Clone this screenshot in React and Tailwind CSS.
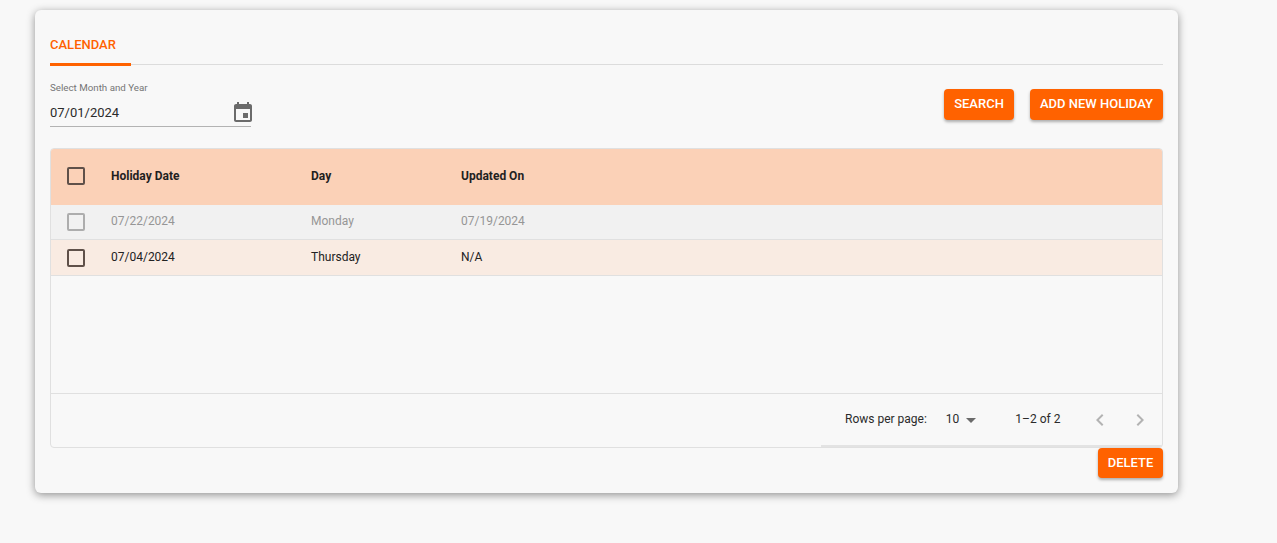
import React from 'react';

const ORANGE = 'bg-[#ff6200]';

const Check = ({ muted }) => (
  <div className="w-[60px] shrink-0 pl-[16px]">
    <div className={`w-[18px] h-[18px] rounded-[2px] border-2 ${muted ? 'border-[#adadad]' : 'border-[#5f5049]'}`}></div>
  </div>
);

const ActionButton = ({ children, className = '' }) => (
  <button className={`${ORANGE} text-white text-[13px] font-medium rounded-[4px] flex items-center justify-center shadow-[0_2px_3px_rgba(0,0,0,0.3)] ${className}`}>
    {children}
  </button>
);

const Row = ({ date, day, updated, className, muted }) => (
  <div className={`flex items-center border-b border-[#e0e0e0] text-[12px] shrink-0 ${className}`}>
    <Check muted={muted} />
    <div className="w-[200px] pb-[2px]">{date}</div>
    <div className="w-[150px] pb-[2px]">{day}</div>
    <div className="pb-[2px]">{updated}</div>
  </div>
);

export default function App() {
  return (
    <div className="min-h-[543px] bg-[#f8f8f8] pt-[10px] pl-[35px] font-['Roboto',sans-serif]">
      <div className="w-[1143px] h-[483px] bg-[#f8f8f8] rounded-[6px] px-[15px] pt-[15px] shadow-[0_2px_8px_rgba(0,0,0,0.42)]">
        {/* tabs */}
        <div className="h-[40px] border-b border-[#dcdcdc]">
          <div className="w-[81px] h-[41px] pt-[2px] text-[#ff6200] text-[13px] font-medium flex items-center border-b-[3px] border-[#ff6200]">
            CALENDAR
          </div>
        </div>

        {/* filters */}
        <div className="flex justify-between h-[83px]">
          <div className="w-[201px] pt-[17px]">
            <div className="text-[9.75px] leading-[12px] text-[#757575]">Select Month and Year</div>
            <div className="h-[33px] pt-[5px] flex items-center justify-between border-b border-[#b3b3b3] text-[13px] text-[#2b2b2b]">
              <span>07/01/2024</span>
              <svg width="24" height="24" viewBox="0 0 24 24" fill="#6b6b6b" className="mr-[-4px]">
                <path d="M17 12h-5v5h5v-5zM16 1v2H8V1H6v2H5c-1.11 0-1.99.9-1.99 2L3 19c0 1.1.89 2 2 2h14c1.1 0 2-.9 2-2V5c0-1.1-.9-2-2-2h-1V1h-2zm3 18H5V8h14v11z" />
              </svg>
            </div>
          </div>
          <div className="flex gap-[16px] pt-[24px]">
            <ActionButton className="w-[70px] h-[31px] pb-[2px]">SEARCH</ActionButton>
            <ActionButton className="w-[133px] h-[31px] pb-[2px]">ADD NEW HOLIDAY</ActionButton>
          </div>
        </div>

        {/* table */}
        <div className="h-[300px] border border-[#e0e0e0] rounded-[4px] flex flex-col overflow-hidden">
          <div className="h-[56px] bg-[#fbd1b7] flex items-center text-[12px] font-bold text-[#1f1f1f] shrink-0 pb-[2px]">
            <Check />
            <div className="w-[200px]">Holiday Date</div>
            <div className="w-[150px]">Day</div>
            <div>Updated On</div>
          </div>
          <Row date="07/22/2024" day="Monday" updated="07/19/2024" className="bg-[#f1f1f1] h-[35px] text-[#969696]" muted />
          <Row date="07/04/2024" day="Thursday" updated="N/A" className="bg-[#f9ebe2] h-[36px] text-[#222222]" />
          <div className="flex-1"></div>
          <div className="h-[54px] border-t border-[#e0e0e0] flex justify-end shrink-0">
            <div className="w-[341px] h-[53px] border-b-2 border-[#e3e3e3] flex items-center text-[12px] text-[#2b2b2b] pb-[1px]">
              <span className="ml-[24px]">Rows per page:</span>
              <span className="ml-[19px]">10</span>
              <svg width="24" height="24" viewBox="0 0 24 24" fill="#6b6b6b" className="mt-[2px]">
                <path d="M7 10l5 5 5-5z" />
              </svg>
              <span className="ml-[32px]">1–2 of 2</span>
              <svg width="24" height="24" viewBox="0 0 24 24" fill="#b3b3b3" className="ml-[28px] mt-[1px]">
                <path d="M15.41 7.41 14 6l-6 6 6 6 1.41-1.41L10.83 12z" />
              </svg>
              <svg width="24" height="24" viewBox="0 0 24 24" fill="#b3b3b3" className="ml-[16px] mt-[1px]">
                <path d="M10 6 8.59 7.41 13.17 12l-4.58 4.59L10 18l6-6z" />
              </svg>
            </div>
          </div>
        </div>

        <div className="flex justify-end">
          <ActionButton className="w-[65px] h-[30px]">DELETE</ActionButton>
        </div>
      </div>
    </div>
  );
}
